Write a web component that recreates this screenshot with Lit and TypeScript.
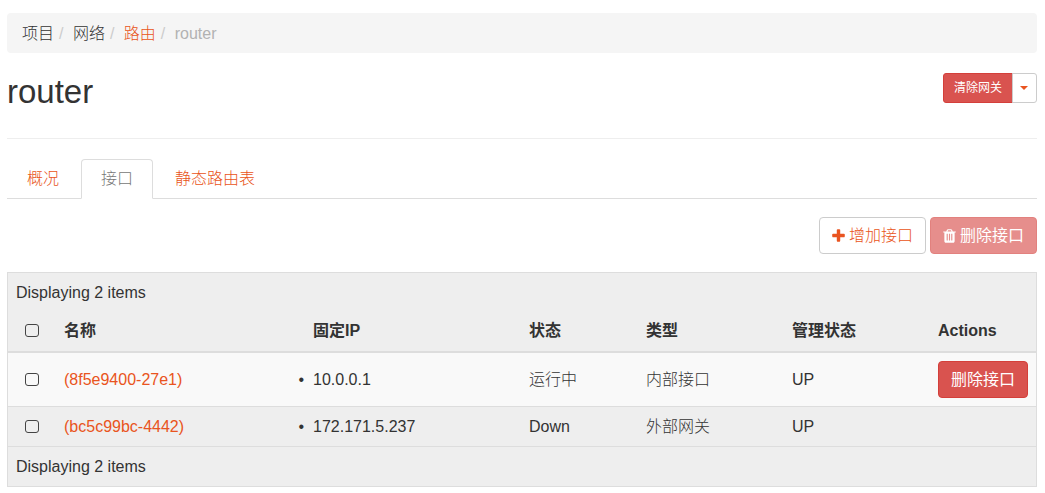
import { LitElement, html, css, svg, nothing } from "lit";
import { customElement, state } from "lit/decorators.js";

interface Port {
  id: string;
  name: string;
  ips: string[];
  status: string;
  type: string;
  admin: string;
  removable: boolean;
}

const PORTS: Port[] = [
  { id: "p1", name: "(8f5e9400-27e1)", ips: ["10.0.0.1"], status: "运行中", type: "内部接口", admin: "UP", removable: true },
  { id: "p2", name: "(bc5c99bc-4442)", ips: ["172.171.5.237"], status: "Down", type: "外部网关", admin: "UP", removable: false },
];

const plusPath = svg`<path d="M1600 736v192q0 40-28 68t-68 28h-416v416q0 40-28 68t-68 28h-192q-40 0-68-28t-28-68v-416h-416q-40 0-68-28t-28-68v-192q0-40 28-68t68-28h416v-416q0-40 28-68t68-28h192q40 0 68 28t28 68v416h416q40 0 68 28t28 68z"/>`;
const trashPath = svg`<path d="M704 1376v-704q0-14-9-23t-23-9h-64q-14 0-23 9t-9 23v704q0 14 9 23t23 9h64q14 0 23-9t9-23zm256 0v-704q0-14-9-23t-23-9h-64q-14 0-23 9t-9 23v704q0 14 9 23t23 9h64q14 0 23-9t9-23zm256 0v-704q0-14-9-23t-23-9h-64q-14 0-23 9t-9 23v704q0 14 9 23t23 9h64q14 0 23-9t9-23zm-544-992h448l-48-117q-7-9-17-11h-317q-10 2-17 11zm928 32v64q0 14-9 23t-23 9h-96v948q0 83-47 143.5t-113 60.5h-832q-66 0-113-58.5t-47-141.5v-952h-96q-14 0-23-9t-9-23v-64q0-14 9-23t23-9h309l70-167q15-37 54-63t79-26h320q40 0 79 26t54 63l70 167h309q14 0 23 9t9 23z"/>`;

@customElement("app-root")
export class AppRoot extends LitElement {
  static styles = css`
    :host {
      display: block;
      padding: 13px 8px 6px 7px;
      background: #fff;
      color: #333;
      font: 300 16px/23px "Liberation Sans", "Noto Sans CJK SC", sans-serif;
    }
    * { box-sizing: border-box; }
    a { color: #e95420; text-decoration: none; }
    .crumbs {
      display: flex;
      margin: 0;
      padding: 9px 15px 8px;
      list-style: none;
      background: #f5f5f5;
      border-radius: 4px;
    }
    .crumbs li + li::before {
      content: "/\\00a0";
      padding: 0 5px;
      color: #ccc;
    }
    .crumbs .plain { color: #333; }
    .crumbs .current { color: #b2b2b2; }
    .header {
      display: flex;
      justify-content: space-between;
      align-items: flex-start;
      padding: 20px 0 28px;
      border-bottom: 1px solid #eee;
    }
    .title { margin: 0; font-size: 33px; font-weight: 400; line-height: 37px; }
    .btn {
      display: inline-flex;
      align-items: center;
      gap: 4px;
      height: 37px;
      padding: 0 12px;
      border: 1px solid #ccc;
      border-radius: 4px;
      background: #fff;
      color: #e95420;
      font: inherit;
      white-space: nowrap;
    }
    .danger { background: #d9534f; border-color: #d43f3a; color: #fff; font-weight: 400; }
    .btn:disabled { opacity: 0.65; }
    .group { display: flex; }
    .group .btn { height: 30px; padding: 0 10px; font-size: 12px; }
    .group .main { border-radius: 3px 0 0 3px; }
    .group .more { margin-left: -1px; padding: 0 8px 0 7px; border-radius: 0 3px 3px 0; }
    .caret { border: 4px solid transparent; border-top-color: #e95420; border-bottom: 0; }
    .icon { width: 13px; height: 16px; fill: currentColor; }
    .tabs {
      display: flex;
      gap: 2px;
      margin: 20px 0 0;
      padding: 0;
      list-style: none;
      border-bottom: 1px solid #ddd;
    }
    .tab {
      display: block;
      height: 40px;
      margin-bottom: -1px;
      padding: 7px 19px;
      border: 1px solid transparent;
      border-radius: 4px 4px 0 0;
      line-height: 24px;
    }
    .tab.active { color: #777; background: #fff; border-color: #ddd #ddd #fff; }
    .toolbar { display: flex; justify-content: flex-end; gap: 4px; padding: 18px 0; }
    table {
      width: 100%;
      table-layout: fixed;
      border: 1px solid #ddd;
      border-spacing: 0;
      background: #eee;
    }
    .c-check { width: 48px; }
    .c-name { width: 249px; }
    .c-ip { width: 216px; }
    .c-status { width: 117px; }
    .c-type { width: 146px; }
    .c-admin { width: 146px; }
    .c-actions { width: 106px; }
    th, td { padding: 8px; text-align: left; vertical-align: middle; line-height: 23px; }
    th { font-weight: 700; }
    .count { font-weight: 300; }
    .heads th { padding: 7px 8px 9px; border-bottom: 2px solid #ddd; }
    tbody td { border-bottom: 1px solid #ddd; }
    tbody tr:nth-child(odd) { background: #f9f9f9; }
    td .btn { display: flex; }
    th.pick, td.pick { text-align: center; }
    .pick input {
      appearance: none;
      display: block;
      width: 14px;
      height: 13px;
      margin: 0 auto;
      border: 1px solid #444;
      border-radius: 3px;
    }
    .pick input:checked { background: #e95420; }
    .ips { margin: 0; padding: 0; }
    .ips li::marker { content: "•\\00a0\\00a0"; }
  `;

  @state() private selected = new Set<string>();

  private toggle(id: string) {
    const next = new Set(this.selected);
    next.has(id) ? next.delete(id) : next.add(id);
    this.selected = next;
  }

  private toggleAll(e: Event) {
    const on = (e.target as HTMLInputElement).checked;
    this.selected = new Set(on ? PORTS.map((p) => p.id) : []);
  }

  private renderPort(p: Port) {
    return html`<tr>
      <td class="pick"><input type="checkbox" aria-label=${p.name} .checked=${this.selected.has(p.id)} @change=${() => this.toggle(p.id)}></td>
      <td><a href="#">${p.name}</a></td>
      <td><ul class="ips">${p.ips.map((ip) => html`<li>${ip}</li>`)}</ul></td>
      <td>${p.status}</td>
      <td>${p.type}</td>
      <td>${p.admin}</td>
      <td>${p.removable ? html`<button class="btn danger" type="button">删除接口</button>` : nothing}</td>
    </tr>`;
  }

  render() {
    const count = `Displaying ${PORTS.length} items`;
    return html`
      <nav>
        <ol class="crumbs">
          <li class="plain">项目</li>
          <li class="plain">网络</li>
          <li><a href="#">路由</a></li>
          <li class="current">router</li>
        </ol>
      </nav>
      <header class="header">
        <h1 class="title">router</h1>
        <div class="group">
          <button class="btn danger main" type="button">清除网关</button>
          <button class="btn more" type="button" aria-label="更多"><span class="caret"></span></button>
        </div>
      </header>
      <ul class="tabs">
        <li><a class="tab" href="#">概况</a></li>
        <li><a class="tab active" href="#">接口</a></li>
        <li><a class="tab" href="#">静态路由表</a></li>
      </ul>
      <div class="toolbar">
        <button class="btn" type="button"><svg class="icon" viewBox="192 0 1408 1792">${plusPath}</svg>增加接口</button>
        <button class="btn danger" type="button" ?disabled=${this.selected.size === 0}><svg class="icon" viewBox="192 0 1408 1792">${trashPath}</svg>删除接口</button>
      </div>
      <table>
        <colgroup>
          <col class="c-check"><col class="c-name"><col class="c-ip"><col class="c-status"><col class="c-type"><col class="c-admin"><col class="c-actions">
        </colgroup>
        <thead>
          <tr><th class="count" colspan="7">${count}</th></tr>
          <tr class="heads">
            <th class="pick"><input type="checkbox" aria-label="全选" .checked=${this.selected.size === PORTS.length} @change=${this.toggleAll}></th>
            <th>名称</th><th>固定IP</th><th>状态</th><th>类型</th><th>管理状态</th><th>Actions</th>
          </tr>
        </thead>
        <tbody>${PORTS.map((p) => this.renderPort(p))}</tbody>
        <tfoot><tr><td colspan="7">${count}</td></tr></tfoot>
      </table>
    `;
  }
}
